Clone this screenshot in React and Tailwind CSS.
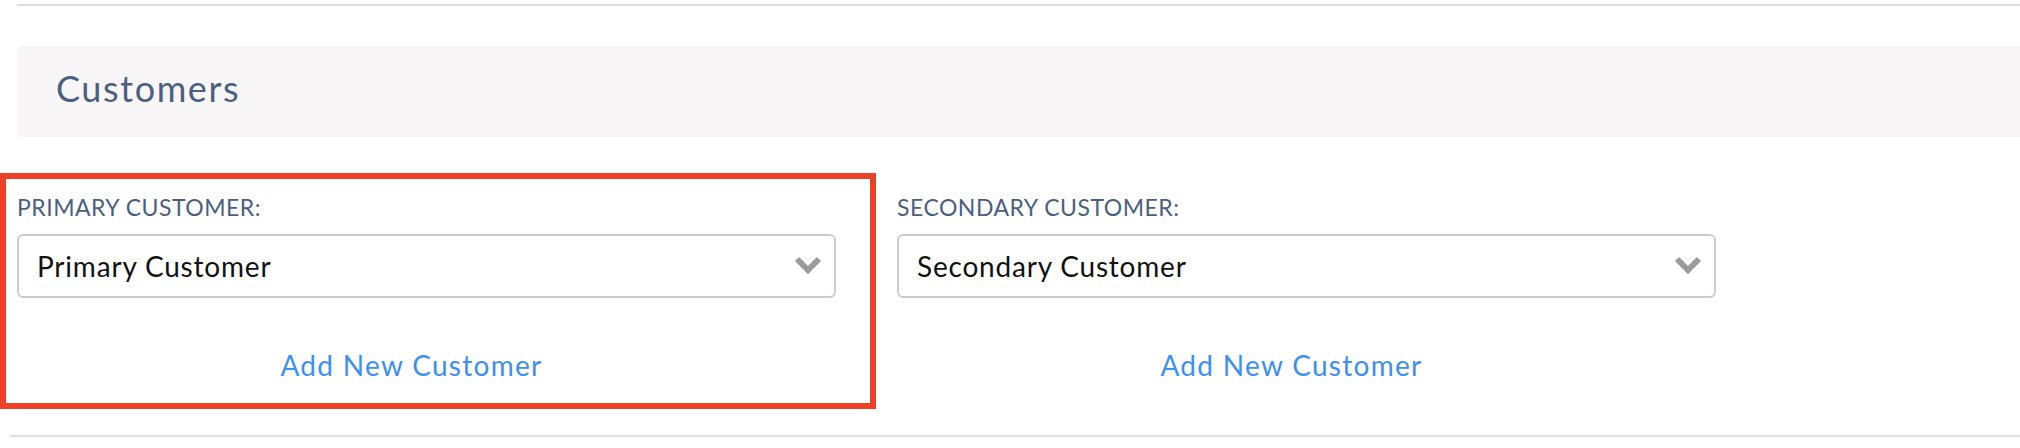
const Chevron = () => (
  <svg width="28" height="20" viewBox="0 0 28 20" className="ml-auto mr-[12px] shrink-0">
    <path d="M3 3 L14 14 L25 3" fill="none" stroke="#9b9b9b" strokeWidth="6" />
  </svg>
);

const CustomerField = ({ label, value }) => (
  <div className="flex flex-col">
    <div className="text-[23px] leading-none tracking-[0.5px] text-[#4b6080] uppercase">{label}</div>
    <div className="mt-[15px] w-[819px] h-[64px] border-2 border-[#cccccc] rounded-[6px] bg-white flex items-center pl-[18px]">
      <span className="text-[28px] leading-none tracking-[0.8px] text-[#111111]">{value}</span>
      <Chevron />
    </div>
    <div className="mt-[53px] w-[819px] pr-[30px] text-center">
      <a href="#" className="text-[28px] leading-none tracking-[1.3px] text-[#3d8ef5]">
        Add New Customer
      </a>
    </div>
  </div>
);

export default function App() {
  return (
    <div className="w-[2020px] h-[448px] bg-white overflow-hidden font-['Lato',sans-serif]">
      <div className="pt-[4px] pl-[17px]">
        <div className="h-[2px] bg-[#dddddd]" />
      </div>

      <div className="mt-[40px] ml-[17px] h-[91px] bg-[#f8f6f7] rounded-tl-[6px] flex items-center pl-[39px] pb-[7px]">
        <h2 className="text-[36px] leading-none tracking-[1.6px] text-[#4b6080]">Customers</h2>
      </div>

      <div className="mt-[36px] flex items-start">
        <div className="w-[876px] h-[236px] border-[6px] border-[#ec4127] pl-[11px] pt-[17px]">
          <CustomerField label="Primary Customer:" value="Primary Customer" />
        </div>
        <div className="ml-[21px] pt-[23px]">
          <CustomerField label="Secondary Customer:" value="Secondary Customer" />
        </div>
      </div>

      <div className="mt-[26px] ml-[10px] h-[2px] bg-[#dddddd]" />
    </div>
  );
}
